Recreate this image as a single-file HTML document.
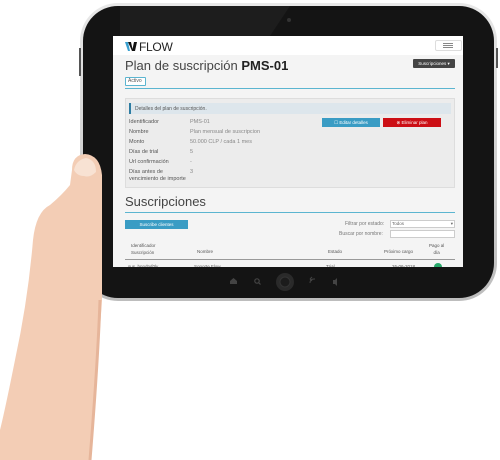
<!DOCTYPE html>
<html><head><meta charset="utf-8"><style>
*{margin:0;padding:0;box-sizing:border-box}
body{width:500px;height:460px;background:#fff;position:relative;overflow:hidden;font-family:"Liberation Sans",sans-serif}
.a{position:absolute}
.scr{left:113px;top:36px;width:350px;height:231px;background:#f4f4f4;overflow:hidden}
.t{font-size:5.5px;color:#555;position:absolute;white-space:nowrap}
</style></head><body>
<svg class="a" style="left:0;top:0" width="500" height="460">
<defs><linearGradient id="rim" x1="0" y1="0" x2="0" y2="1"><stop offset="0" stop-color="#e8e8e8"/><stop offset="1" stop-color="#bdbdbd"/></linearGradient></defs>
<rect x="80" y="3" width="417" height="298" rx="38" fill="url(#rim)"/>
<rect x="83" y="6" width="411" height="292" rx="35" fill="#141414"/>
<path d="M120 6 L290 6 L270 36 L120 36 Z" fill="#1d1d1d"/>
<rect x="79" y="48" width="2" height="28" fill="#555"/>
<rect x="496" y="48" width="2" height="20" fill="#555"/>
<circle cx="289" cy="20" r="2" fill="#333"/>
<circle cx="285" cy="282" r="9" fill="#2a2a2a"/><circle cx="285" cy="282" r="5" fill="#1c1c1c" stroke="#333"/>
<path d="M230 284 v-3 l3.5-3 3.5 3 v3 z" fill="#444"/>
<circle cx="257" cy="281" r="2.2" fill="none" stroke="#444" stroke-width="1.2"/><path d="M258.5 282.5 l2 2" stroke="#444" stroke-width="1.2"/>
<path d="M310 283 q0-4 4-4 h1 M310 279 l2-2 M310 279 l2 2" stroke="#444" fill="none" stroke-width="1"/>
<path d="M333 280 h2 l2-2 v8 l-2-2 h-2z" fill="#444"/>
<path d="M90 460 L96 380 Q100 330 102 300 L102 175 Q100 155 85 154 Q72 155 72 170 L70 185 Q62 195 50 205 Q36 212 33 240 Q28 300 15 360 Q5 410 0 430 L0 460 Z" fill="#f3cdb5"/>
<path d="M74 170 Q76 160 86 158 Q96 160 96 172 Q90 178 84 176 Q77 176 74 170Z" fill="#f8e2d3"/>
<path d="M100 300 Q98 360 90 460" stroke="#e6b59a" stroke-width="3" fill="none"/>
</svg>
<div class="a scr">
<div class="a" style="left:0;top:0;width:350px;height:19px;background:#fff"></div>
<svg class="a" style="left:12px;top:6px" width="14" height="9"><path d="M0 0h3l2 9h-2z" fill="#3aa0d0"/><path d="M3 0h3l1.5 7 1.5-7h2l-2 9h-2z M9 0h3l-2 9h-2z" fill="#111"/></svg>
<div class="a" style="left:26px;top:4px;font-size:12px;color:#222;letter-spacing:-.3px">FLOW</div>
<div class="a" style="left:322px;top:4px;width:27px;height:11px;border:1px solid #ddd;border-radius:2px"></div>
<div class="a" style="left:330px;top:7px;width:10px;height:5px;border-top:1px solid #888;border-bottom:1px solid #888"></div><div class="a" style="left:330px;top:9px;width:10px;height:1px;background:#888"></div>
<div class="a" style="left:12px;top:22px;font-size:13px;color:#444">Plan de suscripción <b style="color:#222">PMS-01</b></div>
<div class="a" style="left:300px;top:23px;width:42px;height:9px;background:#444;border-radius:1px;color:#fff;font-size:4.5px;line-height:9px;text-align:center">Suscripciones ▾</div>
<div class="a" style="left:12px;top:41px;width:21px;height:9px;border:1px solid #5bb5d0;border-radius:1px;font-size:5px;line-height:7px;padding-left:2px;color:#555;background:#fff">Activo</div>
<div class="a" style="left:12px;top:52px;width:330px;height:1px;background:#5bb5d0"></div>
<div class="a" style="left:12px;top:62px;width:330px;height:90px;background:#ececec;border:1px solid #ddd"></div>
<div class="a" style="left:16px;top:67px;width:322px;height:11px;background:#dde6ec;border-left:2px solid #2d7ca2"></div>
<div class="t" style="left:22px;top:70px;font-size:5px">Detalles del plan de suscripción.</div>
<div class="t" style="left:16px;top:83px">Identificador</div><div class="t" style="left:77px;top:83px;color:#888">PMS-01</div>
<div class="t" style="left:16px;top:93px">Nombre</div><div class="t" style="left:77px;top:93px;color:#888">Plan mensual de suscripcion</div>
<div class="t" style="left:16px;top:103px">Monto</div><div class="t" style="left:77px;top:103px;color:#888">50.000 CLP / cada 1 mes</div>
<div class="t" style="left:16px;top:113px">Días de trial</div><div class="t" style="left:77px;top:113px;color:#888">5</div>
<div class="t" style="left:16px;top:123px">Url confirmación</div><div class="t" style="left:77px;top:123px;color:#888">-</div>
<div class="t" style="left:16px;top:133px;line-height:7px">Días antes de<br>vencimiento de importe</div><div class="t" style="left:77px;top:133px;color:#888">3</div>
<div class="a" style="left:209px;top:82px;width:58px;height:9px;background:#3a9cc4;color:#fff;font-size:4.5px;line-height:9px;text-align:center">☐ Editar detalles</div>
<div class="a" style="left:270px;top:82px;width:58px;height:9px;background:#cc0f15;color:#fff;font-size:4.5px;line-height:9px;text-align:center">⊗ Eliminar plan</div>
<div class="a" style="left:12px;top:158px;font-size:13px;color:#444">Suscripciones</div>
<div class="a" style="left:12px;top:176px;width:330px;height:1px;background:#5bb5d0"></div>
<div class="a" style="left:12px;top:184px;width:63px;height:9px;background:#3a9cc4;color:#fff;font-size:4.5px;line-height:9px;text-align:center">Suscribe clientes</div>
<div class="t" style="left:232px;top:185px;color:#777;font-size:5px">Filtrar por estado:</div>
<div class="a" style="left:277px;top:184px;width:65px;height:8px;background:#fff;border:1px solid #ccc;font-size:4.5px;line-height:6px;padding-left:1px;color:#666">Todos<span style="float:right;padding-right:1px">▾</span></div>
<div class="t" style="left:226px;top:195px;color:#777;font-size:5px">Buscar por nombre:</div>
<div class="a" style="left:277px;top:194px;width:65px;height:8px;background:#fff;border:1px solid #ccc"></div>
<div class="t" style="left:18px;top:206px;font-size:4.5px;line-height:7px">Identificador<br>Suscripción</div>
<div class="t" style="left:84px;top:213px;font-size:4.5px">Nombre</div>
<div class="t" style="left:215px;top:213px;font-size:4.5px">Estado</div>
<div class="t" style="left:271px;top:213px;font-size:4.5px">Próximo cargo</div>
<div class="t" style="left:316px;top:206px;font-size:4.5px;line-height:7px;text-align:center">Pago al<br>día</div>
<div class="a" style="left:12px;top:223px;width:330px;height:1px;background:#999"></div>
<div class="t" style="left:15px;top:228px;font-size:4.5px">sus_bnndtuf0ly</div>
<div class="t" style="left:81px;top:228px;font-size:4.5px">Soporte Flow</div>
<div class="t" style="left:213px;top:228px;font-size:4.5px">Trial</div>
<div class="t" style="left:279px;top:228px;font-size:4.5px">26-06-2018</div>
<div class="a" style="left:321px;top:227px;width:8px;height:8px;border-radius:50%;background:#27a86a"></div>
</div>
</body></html>
